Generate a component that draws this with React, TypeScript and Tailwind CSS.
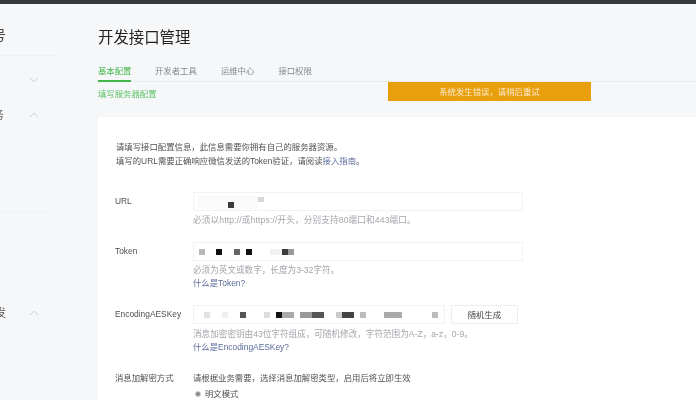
const font = { fontFamily: '"Liberation Sans", "Noto Sans CJK SC", sans-serif' };

function Chevron({ up }: { up?: boolean }) {
  return (
    <svg width="10" height="6" viewBox="0 0 10 6" fill="none" stroke="#c4c7cc" strokeWidth="0.9">
      <path d={up ? "M1 5.2 5 1.2 9 5.2" : "M1 .8 5 4.8 9 .8"} />
    </svg>
  );
}

function Block({ c }: { c: string }) {
  return <span className={c} />;
}

export default function App() {
  return (
    <div style={font} className="w-[696px] h-[400px] overflow-hidden bg-[#f6f7f9] flex flex-col blur-[0.4px] text-[8.4px] leading-[14px] text-[#505050]">
      <div className="h-[4px] shrink-0 bg-[#38393b]" />
      <div className="flex flex-1 min-h-0">
        <aside className="w-[98px] shrink-0 relative overflow-hidden text-[#555]">
          <div className="w-[55px] h-[52px] border-b border-[#f0f1f3] flex items-center">
            <span className="ml-[-8px] mt-[10px] text-[14px] text-[#444]">号</span>
          </div>
          <div className="h-[20px] mt-[14px] flex justify-end w-[39px] items-center">
            <Chevron />
          </div>
          <div className="h-[20px] mt-[15px] flex items-center w-[39px] justify-between">
            <span className="ml-[-7px] text-[11px] leading-[14px]">务</span>
            <Chevron up />
          </div>
          <div className="mt-[87px] w-[48px] border-b border-[#eff0f2]" />
          <div className="h-[20px] mt-[90px] flex items-center w-[39px] justify-between">
            <span className="ml-[-5px] text-[11px] leading-[14px]">发</span>
            <Chevron up />
          </div>
        </aside>
        <main className="flex-1 min-w-0 flex flex-col">
          <h1 className="mt-[23px] h-[22px] text-[15.4px] leading-[22px] text-[#222]">开发接口管理</h1>
          <div className="relative mt-[15px] h-[18px] border-b border-[#e9ebee] flex text-[#83878c]">
            <div className="w-[33px] h-[18px] border-b-2 border-[#44b549] text-[#44b549] whitespace-nowrap">基本配置</div>
            <div className="ml-[24px] whitespace-nowrap">开发者工具</div>
            <div className="ml-[24px] whitespace-nowrap">运维中心</div>
            <div className="ml-[24px] whitespace-nowrap">接口权限</div>
            <div className="absolute left-[290px] top-[18px] w-[203px] h-[19px] bg-[#e99e0c] text-[#fbeccf] flex items-center justify-center">系统发生错误，请稍后重试</div>
          </div>
          <div className="mt-[5px] h-[14px] text-[#5fc26a]">填写服务器配置</div>
          <section className="mt-[16px] flex-1 bg-white pl-[17px] pt-[23px] min-h-0">
            <p className="pl-[1px] text-[#505050]">请填写接口配置信息，此信息需要你拥有自己的服务器资源。</p>
            <p className="pl-[1px] text-[#505050]">填写的URL需要正确响应微信发送的Token验证，请阅读<span className="text-[#5b6b9a]">接入指南</span>。</p>

            <div className="mt-[24px] flex">
              <div className="w-[78px] shrink-0 pt-[2px]">URL</div>
              <div>
                <div className="w-[330px] h-[19px] border border-[#f1f2f3] relative">
                  <div className="absolute left-[4px] top-[3px] w-[60px] h-[13px] bg-[#fafafa]" />
                  <Block c="absolute left-[34px] top-[9px] w-[6px] h-[6px] bg-[#3a3a3a]" />
                  <Block c="absolute left-[64px] top-[4px] w-[6px] h-[5px] bg-[#d8d8d8]" />
                </div>
                <div className="mt-[2px] text-[8.6px] tracking-[0.15px] text-[#a3a6ab]">必须以http://或https://开头，分别支持80端口和443端口。</div>
              </div>
            </div>

            <div className="mt-[15px] flex">
              <div className="w-[78px] shrink-0 pt-[2px]">Token</div>
              <div>
                <div className="w-[330px] h-[19px] border border-[#f1f2f3] flex items-center pl-[5px]">
                  <Block c="w-[6px] h-[6px] bg-[#b9b9b9]" />
                  <Block c="ml-[11px] w-[6px] h-[6px] bg-[#111]" />
                  <Block c="ml-[12px] w-[6px] h-[6px] bg-[#666]" />
                  <Block c="ml-[6px] w-[6px] h-[6px] bg-[#111]" />
                  <Block c="ml-[18px] w-[12px] h-[6px] bg-[#f2f2f2]" />
                  <Block c="w-[6px] h-[6px] bg-[#3c3c3c]" />
                  <Block c="w-[6px] h-[6px] bg-[#999]" />
                </div>
                <div className="mt-[2px] text-[8.6px] text-[#a3a6ab]">必须为英文或数字，长度为3-32字符。</div>
                <div className="mt-[-1px] text-[#5b6b9a]">什么是Token?</div>
              </div>
            </div>

            <div className="mt-[15px] flex">
              <div className="w-[78px] shrink-0 pt-[2px]">EncodingAESKey</div>
              <div>
                <div className="flex">
                  <div className="w-[252px] h-[19px] border border-[#f1f2f3] flex items-center pl-[10px]">
                    <Block c="w-[6px] h-[6px] bg-[#e2e2e2]" />
                    <Block c="ml-[12px] w-[6px] h-[6px] bg-[#f0f0f0]" />
                    <Block c="ml-[12px] w-[6px] h-[6px] bg-[#555]" />
                    <Block c="ml-[18px] w-[6px] h-[6px] bg-[#ddd]" />
                    <Block c="ml-[6px] w-[6px] h-[6px] bg-[#111]" />
                    <Block c="w-[12px] h-[6px] bg-[#aaa]" />
                    <Block c="ml-[6px] w-[12px] h-[6px] bg-[#999]" />
                    <Block c="w-[12px] h-[6px] bg-[#555]" />
                    <Block c="ml-[12px] w-[6px] h-[6px] bg-[#ccc]" />
                    <Block c="w-[12px] h-[6px] bg-[#444]" />
                    <Block c="ml-[6px] w-[6px] h-[6px] bg-[#bbb]" />
                    <Block c="ml-[18px] w-[18px] h-[6px] bg-[#aaa]" />
                    <Block c="ml-[30px] w-[6px] h-[6px] bg-[#bbb]" />
                  </div>
                  <button className="ml-[6px] w-[67px] h-[19px] border border-[#eceded] rounded-[2px] text-[#444] text-[8.4px]">随机生成</button>
                </div>
                <div className="mt-[3px] text-[8.6px] text-[#a3a6ab]">消息加密密钥由43位字符组成，可随机修改，字符范围为A-Z，a-z，0-9。</div>
                <div className="mt-[-1px] text-[#5b6b9a]">什么是EncodingAESKey?</div>
              </div>
            </div>

            <div className="mt-[17px] flex">
              <div className="w-[78px] shrink-0">消息加解密方式</div>
              <div>
                <div className="text-[#505050]">请根据业务需要，选择消息加解密类型，启用后将立即生效</div>
                <div className="mt-[2px] flex items-center text-[#505050]">
                  <span className="ml-[2px] w-[6px] h-[6px] rounded-full bg-[#8a8a8a] border border-[#ccc]" />
                  <span className="ml-[4px]">明文模式</span>
                </div>
              </div>
            </div>
          </section>
        </main>
      </div>
    </div>
  );
}
